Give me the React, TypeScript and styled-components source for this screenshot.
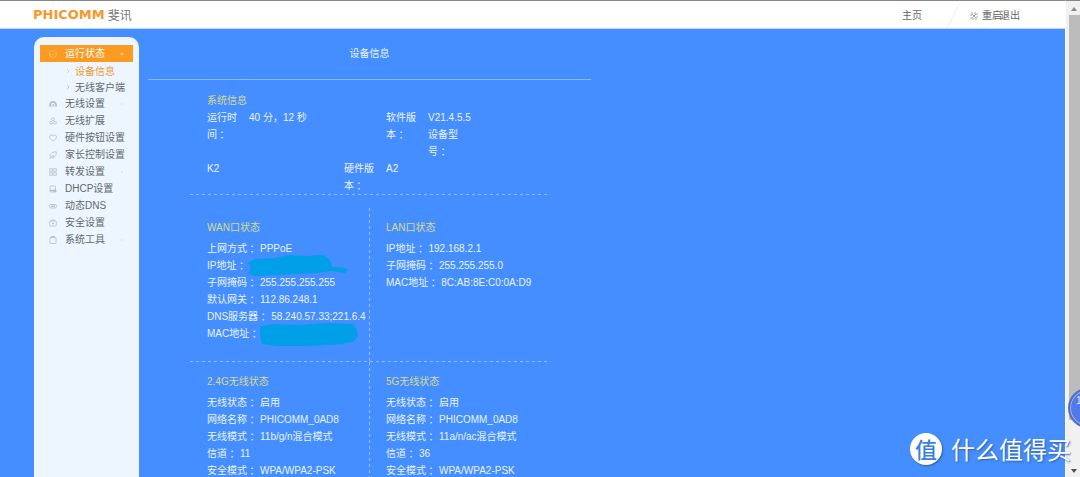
import React from 'react';
import styled, { createGlobalStyle } from 'styled-components';

const sans = '"Liberation Sans", "Noto Sans CJK SC", sans-serif';

const GlobalStyle = createGlobalStyle`
  * { box-sizing: border-box; }
  body {
    margin: 0;
    overflow: hidden;
    font-family: ${sans};
    font-size: 10px;
    line-height: 17px;
    color: #e8f4ff;
    background: #458eff;
  }
  a { color: inherit; text-decoration: none; }
  h1, h2, dl, dd, dt, ul { margin: 0; padding: 0; font-size: inherit; font-weight: 400; }
  ul { list-style: none; }
`;

const Shell = styled.div`
  display: flex;
  height: 100vh;
  position: relative;
  overflow: hidden;
`;

const Page = styled.div`
  flex: 1;
  min-width: 0;
  overflow: hidden;
`;

const Header = styled.header`
  display: flex;
  align-items: center;
  justify-content: space-between;
  height: 29px;
  padding: 0 45px 0 33px;
  border-top: 1px solid #85858a;
  border-bottom: 1px solid #b9d6f5;
  background: #fff;
`;

const Brand = styled.a`
  display: flex;
  align-items: center;
  gap: 3px;
  color: #f7982a;
  font: 700 13px/17px "DejaVu Sans", sans-serif;
`;

const BrandCn = styled.span`
  color: #777;
  font: 400 12px/17px "Noto Sans CJK SC", sans-serif;
`;

const Nav = styled.nav`
  display: flex;
  align-items: center;
  padding-top: 2px;
  color: #666;
`;

const Slash = styled.svg`
  width: 14px;
  height: 26px;
  margin: 0 18px 0 24px;
  fill: none;
  stroke: #ececec;
`;

const NavIcon = styled.svg`
  width: 8px;
  height: 8px;
  margin: 0 4px 0 -8px;
  fill: none;
  stroke: #aaa;
`;

const ExitLink = styled.a`
  margin-left: -2px;
`;

const Body = styled.div`
  display: flex;
  align-items: flex-start;
  padding: 8px 0 0 34px;
`;

const Sidebar = styled.nav`
  width: 105px;
  min-height: 100vh;
  padding: 8px 6px;
  border-radius: 10px 10px 0 0;
  background: #edf6ff;
  color: #626870;
`;

const MenuLink = styled.a<{ $active?: boolean }>`
  display: flex;
  align-items: center;
  height: 17px;
  padding-left: 9px;
  white-space: nowrap;
  color: ${(p) => (p.$active ? '#fff' : 'inherit')};
  background: ${(p) => (p.$active ? '#fb9b22' : 'transparent')};
`;

const MenuIcon = styled.svg<{ $active?: boolean }>`
  width: 8px;
  height: 8px;
  margin-right: 8px;
  flex: none;
  fill: none;
  stroke: ${(p) => (p.$active ? '#ffc57c' : '#b4bac2')};
`;

const Dot = styled.i<{ $active?: boolean }>`
  width: 2px;
  height: 2px;
  margin: 1px 10px 0 auto;
  border-radius: 1px;
  background: ${(p) => (p.$active ? '#fff' : '#f3dfc2')};
`;

const SubMenu = styled.ul`
  padding: 1px 0 0 26px;
`;

const SubLink = styled.a<{ $active?: boolean }>`
  display: flex;
  align-items: center;
  height: 16px;
  white-space: nowrap;
  color: ${(p) => (p.$active ? '#ef9a34' : 'inherit')};
`;

const Chevron = styled.svg<{ $active?: boolean }>`
  width: 4px;
  height: 6px;
  margin-right: 5px;
  fill: none;
  stroke: ${(p) => (p.$active ? '#f3cb98' : '#c3c8ce')};
`;

const Panel = styled.main`
  width: 443px;
  margin-left: 9px;
`;

const PanelTitle = styled.h1`
  padding: 8px 0 17px;
  border-bottom: 1px solid #86bcff;
  text-align: center;
`;

const Content = styled.div`
  width: 358px;
  margin-left: 42px;
  padding-top: 12px;
`;

const dash = (angle: string) =>
  `repeating-linear-gradient(${angle}, #8fc0ff 0 3px, transparent 3px 6px)`;

const Heading = styled.h2`
  color: #d8da8c;
`;

const SystemBlock = styled.section`
  padding: 0 0 1px 17px;
  background: ${dash('90deg')} bottom / 100% 1px no-repeat;
`;

const SystemRow = styled.dl`
  display: flex;
`;

const SysLabel = styled.dt`
  width: 42px;
  padding-right: 10px;
`;

const SysValue = styled.dd`
  width: 137px;
`;

const Stack = styled.div``;

const Quadrants = styled.div`
  display: grid;
  grid-template-columns: 180px 1fr;
  margin-top: 13px;
`;

const Cell = styled.section<{ $top?: boolean; $left?: boolean }>`
  min-height: 154px;
  padding: 11px 0 0 ${(p) => (p.$left ? '17px' : '16px')};
  background:
    ${dash('90deg')} bottom / 100% ${(p) => (p.$top ? '1px' : '0')} no-repeat,
    ${dash('180deg')} right / ${(p) => (p.$left ? '1px' : '0')} 100% no-repeat;
`;

const Facts = styled.dl`
  padding-top: 4px;
`;

const Fact = styled.div`
  display: flex;
  gap: 3px;
  white-space: nowrap;
`;

const Colon = styled.span`
  font-family: "Noto Sans CJK TC", sans-serif;
  line-height: 1;
  vertical-align: -1px;
`;

const FactValue = styled.dd`
  position: relative;
`;

const Scribble = styled.svg`
  position: absolute;
  left: -2px;
  top: -4px;
  width: 102px;
  height: 26px;
  fill: #009fe8;
`;

const Scrollbar = styled.div`
  display: flex;
  flex-direction: column;
  align-items: center;
  width: 15px;
  padding: 6px 0 4px 2px;
  border-top: 1px solid #85858a;
  border-left: 1px solid #fff;
  background: #f1f1f2;
`;

const Arrow = styled.svg<{ $dark?: boolean }>`
  width: 6px;
  height: 4px;
  flex: none;
  fill: ${(p) => (p.$dark ? '#505050' : '#8b8b8b')};
`;

const Track = styled.div`
  flex: 1;
  width: 11px;
  margin: 4px 0;
`;

const Thumb = styled.div`
  height: 90%;
  background: #bcbcbc;
`;

const Bubble = styled.button`
  position: absolute;
  right: -28px;
  top: 388px;
  width: 40px;
  height: 40px;
  padding: 0 0 14px 6px;
  border: 2px solid #5a6db8;
  border-radius: 50%;
  background: #5079ea;
  box-shadow: inset 0 0 0 1px #9db4f5;
  color: #dfe8ff;
  font: 10px/16px ${sans};
  text-align: left;
`;

const Watermark = styled.div`
  position: absolute;
  right: 9px;
  bottom: 12px;
  display: flex;
  align-items: center;
  gap: 9px;
  color: #fff;
  font: 24px/32px "Noto Sans CJK SC", sans-serif;
  text-shadow: 1px 1px 2px #31609f;
`;

const Seal = styled.span`
  width: 32px;
  height: 32px;
  border-radius: 50%;
  background: #fff;
  color: #3b7fdc;
  font-size: 22px;
  font-weight: 500;
  line-height: 31px;
  text-align: center;
  text-shadow: none;
  box-shadow: 1px 1px 2px #31609f;
`;

type IconName =
  | 'check' | 'arch' | 'nodes' | 'heart' | 'leaf' | 'grid' | 'drive' | 'pill' | 'kit' | 'clip';

const icons: Record<IconName, React.ReactNode> = {
  check: <><circle cx="8" cy="8" r="7" /><path d="M5 8l2.500 2.500L12 6" /></>,
  arch: <><path d="M2.500 13a6 6.500 0 1 1 11 0" strokeWidth="3.500" /><path d="M8 8L5.500 14M8 8l2.500 6" /></>,
  nodes: <><circle cx="8" cy="4.500" r="2.800" /><circle cx="3.800" cy="11.500" r="2.800" /><circle cx="12.200" cy="11.500" r="2.800" /></>,
  heart: <path d="M8 14.500L2.200 8.600C-0.500 5.500 1.500 2 4.500 2C6.200 2 7.300 3 8 4.200C8.700 3 9.800 2 11.500 2C14.500 2 16.500 5.500 13.800 8.600Z" />,
  leaf: <><path d="M3.500 13.500C-0.500 8 4 2 14.500 1.500C15.500 9 10.500 16 3.500 13.500Z" /><path d="M1 15.500L10 6.500M6 10.500h4" /></>,
  grid: <><rect x="1.500" y="1.500" width="5" height="5" /><rect x="9.500" y="1.500" width="5" height="5" /><rect x="1.500" y="9.500" width="5" height="5" /><rect x="9.500" y="9.500" width="5" height="5" /></>,
  drive: <><rect x="2" y="2" width="11" height="12" rx="1" /><path d="M2 11h12M10 13h5" strokeWidth="3" /></>,
  pill: <><rect x="1" y="5" width="14" height="7" rx="3" /><path d="M4 8.500h8" strokeWidth="2.500" /></>,
  kit: <><rect x="1.500" y="4" width="13" height="10" rx="1" /><path d="M5 4V2h6v2M8 7v4M6 9h4" /></>,
  clip: <><rect x="2" y="3" width="12" height="12" rx="1" /><path d="M5 3V1h6v2" strokeWidth="2" /></>,
};

const menu: { label: string; icon: IconName; dot?: boolean }[] = [
  { label: '无线设置', icon: 'arch', dot: true },
  { label: '无线扩展', icon: 'nodes' },
  { label: '硬件按钮设置', icon: 'heart' },
  { label: '家长控制设置', icon: 'leaf' },
  { label: '转发设置', icon: 'grid', dot: true },
  { label: 'DHCP设置', icon: 'drive' },
  { label: '动态DNS', icon: 'pill' },
  { label: '安全设置', icon: 'kit' },
  { label: '系统工具', icon: 'clip', dot: true },
];

const ipMask = (
  <Scribble viewBox="0 0 102 26">
    <path d="M1 10L8 6L28 5L42 2L60 3L76 2L83 7L85 14L98 15L101 17L98 20L84 18L70 20L50 21L30 22L8 23L1 20L4 15Z" />
  </Scribble>
);
const macMask = (
  <Scribble viewBox="0 0 102 26">
    <path d="M0 5L14 3L40 4L68 2L92 3L97 8L98 15L94 20L84 23L50 25L16 25L2 23L0 15Z" />
  </Scribble>
);

type Entry = [string, React.ReactNode];

const sections: { title: string; rows: Entry[] }[] = [
  {
    title: 'WAN口状态',
    rows: [
      ['上网方式', 'PPPoE'],
      ['IP地址', ipMask],
      ['子网掩码', '255.255.255.255'],
      ['默认网关', '112.86.248.1'],
      ['DNS服务器', '58.240.57.33;221.6.4'],
      ['MAC地址', macMask],
    ],
  },
  {
    title: 'LAN口状态',
    rows: [
      ['IP地址', '192.168.2.1'],
      ['子网掩码', '255.255.255.0'],
      ['MAC地址', '8C:AB:8E:C0:0A:D9'],
    ],
  },
  {
    title: '2.4G无线状态',
    rows: [
      ['无线状态', '启用'],
      ['网络名称', 'PHICOMM_0AD8'],
      ['无线模式', '11b/g/n混合模式'],
      ['信道', '11'],
      ['安全模式', 'WPA/WPA2-PSK'],
    ],
  },
  {
    title: '5G无线状态',
    rows: [
      ['无线状态', '启用'],
      ['网络名称', 'PHICOMM_0AD8'],
      ['无线模式', '11a/n/ac混合模式'],
      ['信道', '36'],
      ['安全模式', 'WPA/WPA2-PSK'],
    ],
  },
];

const Label = ({ text }: { text: string }) => (
  <>{text}<Colon>：</Colon></>
);

export default function App() {
  return (
    <>
      <GlobalStyle />
      <Shell>
        <Page>
          <Header>
            <Brand href="#">PHICOMM<BrandCn>斐讯</BrandCn></Brand>
            <Nav>
              <a href="#home">主页</a>
              <Slash viewBox="0 0 14 26"><path d="M13 1L1 25" /></Slash>
              <NavIcon viewBox="0 0 8 8">
                <rect x="1" y="1" width="6" height="6" strokeDasharray="2 1" />
                <path d="M2 2l4 4M6 2l-4 4" />
              </NavIcon>
              <a href="#reboot">重启</a>
              <ExitLink href="#exit">退出</ExitLink>
            </Nav>
          </Header>
          <Body>
            <Sidebar>
              <ul>
                <li>
                  <MenuLink href="#status" $active>
                    <MenuIcon viewBox="0 0 16 16" strokeWidth="1.500" $active>{icons.check}</MenuIcon>
                    运行状态
                    <Dot $active />
                  </MenuLink>
                  <SubMenu>
                    {['设备信息', '无线客户端'].map((label, i) => (
                      <li key={label}>
                        <SubLink href="#sub" $active={i === 0}>
                          <Chevron viewBox="0 0 4 6" $active={i === 0}><path d="M1 1l2 2-2 2" /></Chevron>
                          {label}
                        </SubLink>
                      </li>
                    ))}
                  </SubMenu>
                </li>
                {menu.map((item) => (
                  <li key={item.label}>
                    <MenuLink href="#menu">
                      <MenuIcon viewBox="0 0 16 16" strokeWidth="1.500">{icons[item.icon]}</MenuIcon>
                      {item.label}
                      {item.dot && <Dot />}
                    </MenuLink>
                  </li>
                ))}
              </ul>
            </Sidebar>
            <Panel>
              <PanelTitle>设备信息</PanelTitle>
              <Content>
                <SystemBlock>
                  <Heading>系统信息</Heading>
                  <SystemRow>
                    <SysLabel><Label text="运行时间" /></SysLabel>
                    <SysValue>40 分，12 秒</SysValue>
                    <SysLabel><Label text="软件版本" /></SysLabel>
                    <Stack>
                      <dd>V21.4.5.5</dd>
                      <SysLabel><Label text="设备型号" /></SysLabel>
                    </Stack>
                  </SystemRow>
                  <SystemRow>
                    <SysValue>K2</SysValue>
                    <SysLabel><Label text="硬件版本" /></SysLabel>
                    <dd>A2</dd>
                  </SystemRow>
                </SystemBlock>
                <Quadrants>
                  {sections.map((s, i) => (
                    <Cell key={s.title} $top={i < 2} $left={i % 2 === 0}>
                      <Heading>{s.title}</Heading>
                      <Facts>
                        {s.rows.map(([label, value]) => (
                          <Fact key={label}>
                            <dt><Label text={label} /></dt>
                            <FactValue>{value}</FactValue>
                          </Fact>
                        ))}
                      </Facts>
                    </Cell>
                  ))}
                </Quadrants>
              </Content>
            </Panel>
          </Body>
        </Page>
        <Scrollbar>
          <Arrow viewBox="0 0 6 4"><path d="M0 4L3 0L6 4Z" /></Arrow>
          <Track><Thumb /></Track>
          <Arrow viewBox="0 0 6 4" $dark><path d="M0 0L3 4L6 0Z" /></Arrow>
        </Scrollbar>
        <Bubble>1</Bubble>
        <Watermark><Seal>值</Seal>什么值得买</Watermark>
      </Shell>
    </>
  );
}
